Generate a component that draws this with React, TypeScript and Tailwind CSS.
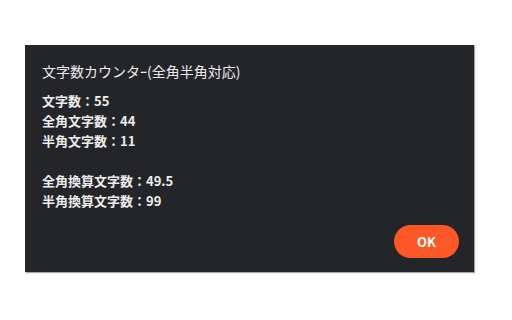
import React from 'react';

const lines = ['文字数：55', '全角文字数：44', '半角文字数：11', '', '全角換算文字数：49.5', '半角換算文字数：99'];

export default function App() {
  return (
    <div className="w-[512px] h-[320px] bg-white overflow-hidden pt-[45px] pl-[25px]">
      <div
        className="w-[449px] h-[227px] bg-[#242529] flex flex-col pl-[17px] pr-[15px] pt-[16px] pb-[14px] text-[#ececec] shadow-[1px_1px_1px_rgba(0,0,0,0.35)]"
        style={{ fontFamily: '"Noto Sans CJK JP", "Noto Sans", sans-serif' }}
      >
        <h1 className="text-[14px] leading-[20px] font-normal">文字数カウンタｰ(全角半角対応)</h1>
        <div className="mt-[10px] text-[13px] leading-[20px] font-bold">
          {lines.map((l, i) => (
            <p key={i} className="h-[20px]">{l}</p>
          ))}
        </div>
        <div className="mt-auto flex justify-end">
          <button className="w-[65px] h-[33px] rounded-full bg-[#fe5727] text-white text-[13px] font-bold">
            OK
          </button>
        </div>
      </div>
    </div>
  );
}
